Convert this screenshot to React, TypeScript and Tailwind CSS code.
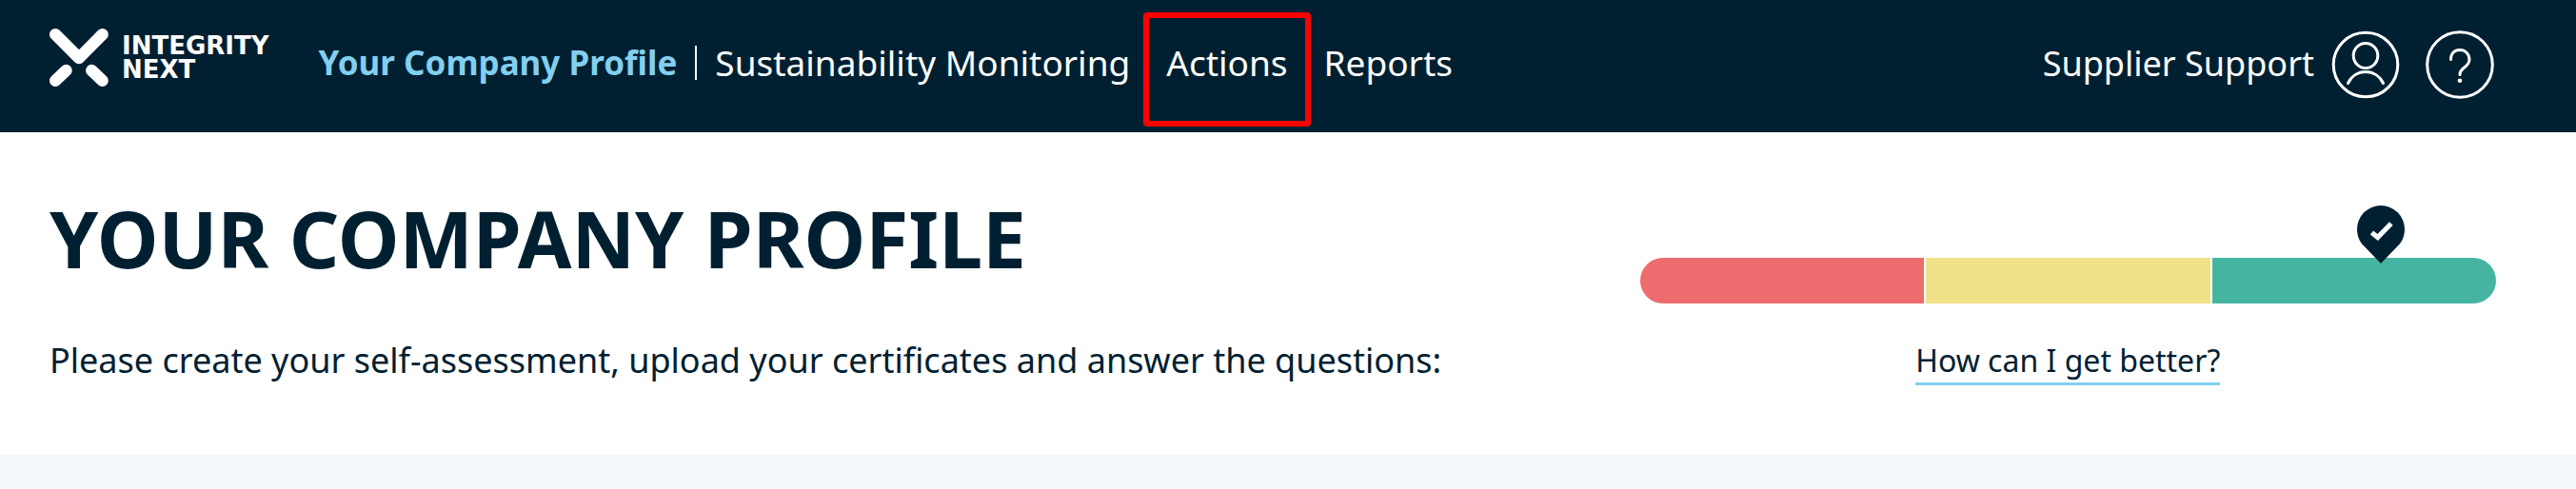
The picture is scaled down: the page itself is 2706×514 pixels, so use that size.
const navLinks = [
  { label: 'Sustainability Monitoring', highlighted: false },
  { label: 'Actions', highlighted: true },
  { label: 'Reports', highlighted: false },
];

const score = 86.5;

export default function App() {
  return (
    <div className="bg-white font-['Noto_Sans',sans-serif] text-[36px] leading-[40px] text-[#002031] whitespace-nowrap">
      {/* Header */}
      <header className="flex items-start justify-between bg-[#002031] pt-[30px] pb-[35px] pl-[52px] pr-[86px] text-white">
        <div className="flex items-start">
          <a href="#" aria-label="Integrity Next" className="flex items-center gap-[14px] mr-[52px]">
            <LogoMark />
            <span className="flex flex-col font-['DejaVu_Sans',sans-serif] text-[26px] leading-[25px] font-bold">
              <span>INTEGRITY</span>
              <span>NEXT</span>
            </span>
          </a>
          <nav className="flex items-center pt-4 text-[37px]">
            <a href="#" className="text-[35px] font-bold text-[#82cff0]">Your Company Profile</a>
            <span className="mx-[19px] h-9 w-0.5 bg-white" />
            <div className="flex gap-[38px]">
              {navLinks.map((link) => (
                <a key={link.label} href="#" className="relative">
                  {link.label}
                  {link.highlighted && (
                    <span className="absolute -inset-x-6 -top-[33px] -bottom-[47px] rounded-sm border-6 border-[#ff0000]" />
                  )}
                </a>
              ))}
            </div>
          </nav>
        </div>

        <div className="flex items-center pt-0.5">
          <a href="#" className="mr-[18px] pb-0.5">Supplier Support</a>
          <div className="flex gap-[27px]">
            <button aria-label="Account">
              <UserIcon />
            </button>
            <button aria-label="Help">
              <HelpIcon />
            </button>
          </div>
        </div>
      </header>

      {/* Profile summary */}
      <main className="flex justify-between pt-[71px] pb-[73px] pl-[52px] pr-[84px]">
        <div>
          <h1 className="text-[82px] leading-[80px] font-bold">YOUR COMPANY PROFILE</h1>
          <p className="mt-[69px]">
            Please create your self-assessment, upload your certificates and answer the questions:
          </p>
        </div>

        <div className="flex w-[35%] flex-col items-center pt-[61px]">
          <div className="relative grid w-full grid-cols-3 gap-0.5">
            <div className="h-12 rounded-l-full bg-[#ee6b6e]" />
            <div className="h-12 bg-[#efe288]" />
            <div className="h-12 rounded-r-full bg-[#45b5a1]" />
            <div className="absolute bottom-[42px] -translate-x-1/2" style={{ left: `${score}%` }}>
              <ScorePin />
            </div>
          </div>
          <a href="#" className="mt-10 border-b-3 border-[#82cff0] pb-[3px] text-[32px]">How can I get better?</a>
        </div>
      </main>

      <div className="h-9 bg-[#f3f7fa]" />
    </div>
  );
}

function LogoMark() {
  return (
    <svg width="62" height="61" viewBox="0 0 62 61" fill="none" stroke="currentColor" strokeWidth="12.4" strokeLinecap="round" strokeLinejoin="round">
      <path d="M6.2 6.2L31 31L55.6 6.2" />
      <path d="M6.2 54.8L17.5 44" />
      <path d="M44.3 44L55.6 54.8" />
    </svg>
  );
}

function UserIcon() {
  return (
    <svg width="72" height="72" viewBox="0 0 72 72" fill="none" stroke="currentColor" strokeWidth="3" strokeLinecap="round">
      <circle cx="36" cy="36" r="33.8" />
      <ellipse cx="36" cy="26.5" rx="12.8" ry="13" />
      <path d="M17.5 55.5C21 48 28 43.5 36 43.5S51 48 54.5 55.5" />
    </svg>
  );
}

function HelpIcon() {
  return (
    <svg width="72" height="72" viewBox="0 0 72 72" fill="none" stroke="currentColor" strokeWidth="3" strokeLinecap="round">
      <circle cx="36" cy="36" r="34.3" />
      <path d="M26.5 30.5C26.5 24.5 30 20.5 36 20.5S46 25 46 30.5C46 35.5 42.5 37.5 39.5 40C37 42 36 43.5 36 46.5" />
      <circle cx="36" cy="52.8" r="2.3" fill="currentColor" stroke="none" />
    </svg>
  );
}

function ScorePin() {
  return (
    <svg width="50" height="61" viewBox="0 0 50 61" fill="none">
      <path d="M25 61L6 41.3C2 37 0 31 0 25A25 25 0 0 1 50 25C50 31 48 37 44 41.3Z" fill="#002031" />
      <path d="M15.5 28.5L21.7 33.5L35.8 19" stroke="#fff" strokeWidth="5.2" />
    </svg>
  );
}
